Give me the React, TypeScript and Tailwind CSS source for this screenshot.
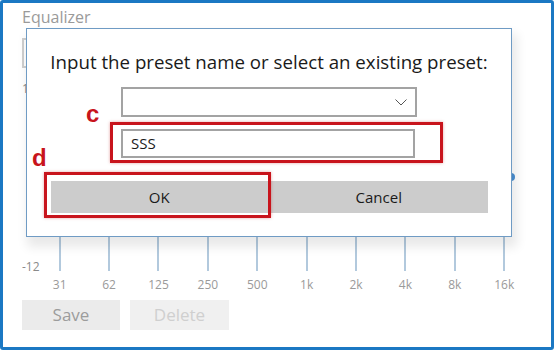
import React from 'react';

const bands = ['31', '62', '125', '250', '500', '1k', '2k', '4k', '8k', '16k'];

const font = { fontFamily: '"Open Sans", "Noto Sans", sans-serif' };

export default function App() {
  return (
    <div className="w-[554px] h-[350px] bg-white" style={font}>
      <div className="relative w-[554px] h-[350px] border-[3px] border-[#1b78c3] rounded-[3px] overflow-hidden bg-white pl-[19px]">
        {/* Equalizer page behind the dialog */}
        <div className="pt-[3px] text-[16px] leading-[22px] text-[#9a9a9a]">Equalizer</div>
        <div className="mt-[10px] w-[250px] h-[30px] border-2 border-[#cfcfcf]" />

        <div className="mt-[12px] flex h-[196px]">
          <div className="w-[13px] flex flex-col justify-between text-[12px] leading-[18px] text-[#8a8a8a] whitespace-nowrap">
            <span>12</span>
            <span>-12</span>
          </div>
          {bands.map((b) => (
            <div key={b} className="relative w-[49.4px] flex justify-center">
              <div className="w-[2px] h-[191px] bg-[#b2c9dd]" />
              <div className="absolute top-[93px] left-1/2 -translate-x-1/2 w-[22px] h-[8px] rounded-full bg-[#4a8fd2]" />
            </div>
          ))}
        </div>

        <div className="flex pl-[13px] text-[12px] leading-[18px] text-[#9a9a9a]">
          {bands.map((b) => (
            <div key={b} className="w-[49.4px] text-center">{b}</div>
          ))}
        </div>

        <div className="mt-[6px] flex gap-[10px]">
          <div className="w-[98px] h-[30px] bg-[#ebebeb] flex items-center justify-center text-[17px] text-[#9c9c9c]">Save</div>
          <div className="w-[99px] h-[30px] bg-[#f0f0f0] flex items-center justify-center text-[17px] text-[#cfcfcf]">Delete</div>
        </div>

        {/* Dialog */}
        <div className="absolute z-10 left-[23px] top-[25px] w-[486px] h-[209px] bg-white border border-[#6f9bc4] shadow-[3px_8px_10px_2px_rgba(0,0,0,0.09)] flex flex-col items-center pt-[20px]">
          <div className="text-[18.7px] leading-[26px] text-[#1a1a1a] whitespace-nowrap">
            Input the preset name or select an existing preset:
          </div>
          <div className="mt-[12px] w-[296px] h-[30px] border-2 border-[#a3a3a3] flex items-center justify-end pr-[8px]">
            <svg width="12" height="7" viewBox="0 0 12 7" fill="none">
              <polyline points="0.5,0.5 6,6 11.5,0.5" stroke="#555" strokeWidth="1" />
            </svg>
          </div>
          <div className="mt-[12px] w-[294px] h-[29px] border-2 border-[#a3a3a3] flex items-center pl-[8px] text-[15px] text-[#1a1a1a] mr-[2px]">
            SSS
          </div>
          <div className="mt-[23px] w-[437px] grid grid-cols-2 gap-[2px]">
            <div className="h-[32px] bg-[#cccccc] flex items-center justify-center text-[15px] text-[#1a1a1a]">OK</div>
            <div className="h-[32px] bg-[#cccccc] flex items-center justify-center text-[15px] text-[#1a1a1a]">Cancel</div>
          </div>
        </div>

        {/* Red annotations */}
        <div className="absolute z-20 left-[107px] top-[119px] w-[333px] h-[41px] border-[3px] border-[#c8141c] shadow-[0_0_3px_rgba(180,0,0,0.35)]" />
        <div className="absolute z-20 left-[41px] top-[169px] w-[227px] h-[46px] border-[3px] border-[#c8141c] shadow-[0_0_3px_rgba(180,0,0,0.35)]" />
        <div className="absolute z-20 left-[83px] top-[99px] text-[24px] leading-none font-bold text-[#c8141c]" style={{ fontFamily: '"Liberation Sans", Arial, sans-serif' }}>c</div>
        <div className="absolute z-20 left-[29px] top-[143px] text-[24px] leading-none font-bold text-[#c8141c]" style={{ fontFamily: '"Liberation Sans", Arial, sans-serif' }}>d</div>
      </div>
    </div>
  );
}
